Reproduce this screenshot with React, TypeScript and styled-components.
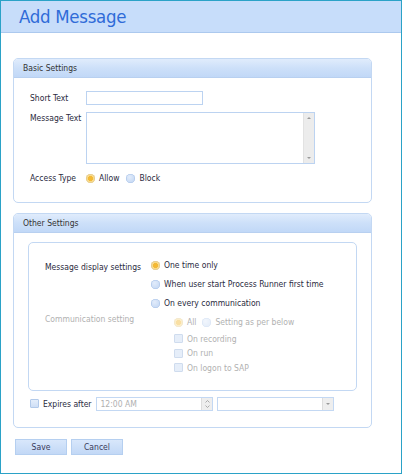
import React from "react";
import styled, { createGlobalStyle } from "styled-components";

const Global = createGlobalStyle`
  html, body { margin: 0; padding: 0; background: #fff; }
  * { box-sizing: border-box; }
  body { font-family: "DejaVu Sans Condensed", "DejaVu Sans", "Liberation Sans", sans-serif; }
`;

const Frame = styled.div`
  width: 402px;
  height: 474px;
  border: 1px solid #2ba2c7;
  background: #fff;
  display: flex;
  flex-direction: column;
`;

const Header = styled.div`
  height: 32px;
  background: #c7ddfa;
  border-bottom: 1px solid #acc9ee;
  display: flex;
  align-items: center;
  padding-left: 18px;
`;

const Title = styled.h1`
  margin: 0;
  font-family: "DejaVu Sans Condensed", "DejaVu Sans", sans-serif;
  font-weight: normal;
  font-size: 18.5px;
  color: #2f6bd8;
  letter-spacing: -0.3px;
`;

const Content = styled.div`
  padding: 25px 29px 0 12px;
  display: flex;
  flex-direction: column;
  gap: 10px;
`;

const Panel = styled.section`
  border: 1px solid #c3d8f3;
  border-radius: 5px;
  overflow: hidden;
`;

const PanelHead = styled.div`
  height: 19px;
  background: linear-gradient(#e0ecfc, #cde0f9 50%, #c1d8f7);
  border-bottom: 1px solid #b8d0f0;
  font-size: 8.5px;
  color: #333;
  display: flex;
  align-items: center;
  padding-left: 9px;
`;

const BasicBody = styled.div`
  padding: 13px 16px 17px;
  display: grid;
  grid-template-columns: 56px auto;
  row-gap: 7px;
  align-items: start;
`;

const Label = styled.span<{ $muted?: boolean; $top?: number }>`
  font-size: 8.5px;
  line-height: 14px;
  color: ${(p) => (p.$muted ? "#b1b1b1" : "#2a2a40")};
  margin-top: ${(p) => p.$top ?? 0}px;
`;

const TextInput = styled.div`
  width: 117px;
  height: 14px;
  border: 1px solid #bcd3f1;
  background: #fff;
`;

const TextArea = styled.div`
  width: 229px;
  height: 52px;
  border: 1px solid #bcd3f1;
  background: #fff;
  display: flex;
  justify-content: flex-end;
`;

const ScrollBar = styled.div`
  width: 11px;
  height: 100%;
  background: #ececec;
  border-left: 1px solid #e2e2e2;
  display: flex;
  flex-direction: column;
  justify-content: space-between;
  align-items: center;
  padding: 4px 0;
`;

const Arrow = styled.div<{ $down?: boolean }>`
  width: 0;
  height: 0;
  border-left: 2.5px solid transparent;
  border-right: 2.5px solid transparent;
  ${(p) =>
    p.$down
      ? "border-top: 2.5px solid #9a9a9a;"
      : "border-bottom: 2.5px solid #9a9a9a;"}
`;

const RadioGroup = styled.div<{ $gap?: number }>`
  display: flex;
  align-items: center;
  gap: ${(p) => p.$gap ?? 8}px;
  height: 14px;
`;

const Option = styled.label<{ $muted?: boolean }>`
  display: flex;
  align-items: center;
  gap: 4px;
  font-size: 8.5px;
  color: ${(p) => (p.$muted ? "#b1b1b1" : "#2a2a40")};
`;

const RadioDot = styled.span<{ $on?: boolean; $muted?: boolean }>`
  width: 9px;
  height: 9px;
  border-radius: 50%;
  flex: none;
  opacity: ${(p) => (p.$muted ? 0.45 : 1)};
  background: ${(p) =>
    p.$on
      ? "radial-gradient(circle, #f3b935 0 2.3px, #f8d98a 2.6px 3.6px, #e9d6a8 4px)"
      : "radial-gradient(circle at 40% 35%, #e2ecfb, #bcd2f1)"};
  box-shadow: inset 0 0 0 0.6px ${(p) => (p.$on ? "#e3c77f" : "#a9c3e8")};
`;

const Check = styled.span<{ $muted?: boolean }>`
  width: 9px;
  height: 9px;
  flex: none;
  border: 1px solid ${(p) => (p.$muted ? "#cfdcee" : "#b2caea")};
  background: ${(p) => (p.$muted ? "#e6eef9" : "linear-gradient(#e4eefb, #cfdff6)")};
  border-radius: 1px;
`;

const OtherBody = styled.div`
  padding: 9px 14px 16px;
  display: flex;
  flex-direction: column;
  gap: 6px;
`;

const Fieldset = styled.div`
  border: 1px solid #c3d8f3;
  border-radius: 5px;
  padding: 17px 16px 15px;
  display: grid;
  grid-template-columns: 106px auto;
  align-items: start;
`;

const OptionColumn = styled.div`
  display: flex;
  flex-direction: column;
  gap: 4px;
`;

const SubOptions = styled.div`
  display: flex;
  flex-direction: column;
  padding-left: 23px;
  gap: 0.5px;
`;

const SubCheck = styled(Option)`
  height: 14px;
`;

const ExpiresRow = styled.div`
  display: flex;
  align-items: center;
  height: 14px;
  padding-left: 2px;
`;

const ExpiresLabel = styled(Option)`
  margin-right: 5px;
  gap: 4px;
`;

const Field = styled.div<{ $w: number }>`
  width: ${(p) => p.$w}px;
  height: 14px;
  border: 1px solid #c3d8f3;
  background: #fff;
  display: flex;
  align-items: center;
  justify-content: space-between;
  font-size: 8.5px;
  color: #b0b0b0;
  padding-left: 3px;
  margin-right: 4px;
`;

const SideButton = styled.div`
  width: 11px;
  height: 12px;
  background: #eeeeee;
  border-left: 1px solid #dddddd;
  display: flex;
  flex-direction: column;
  align-items: center;
  justify-content: center;
  gap: 2px;
`;

const Chevron = styled.svg`
  display: block;
`;

const Buttons = styled.div`
  display: flex;
  gap: 4px;
  padding: 1px 0 0 2px;
`;

const Button = styled.button`
  width: 52px;
  height: 16px;
  padding: 0;
  border: 1px solid #b5cff0;
  background: linear-gradient(#d8e7fb, #c2d8f6);
  font-family: inherit;
  font-size: 8.5px;
  color: #3a3a5a;
`;

export default function App() {
  return (
    <>
      <Global />
      <Frame>
        <Header>
          <Title>Add Message</Title>
        </Header>
        <Content>
          <Panel>
            <PanelHead>Basic Settings</PanelHead>
            <BasicBody>
              <Label>Short Text</Label>
              <TextInput />
              <Label $top={-1}>Message Text</Label>
              <TextArea>
                <ScrollBar>
                  <Arrow />
                  <Arrow $down />
                </ScrollBar>
              </TextArea>
              <Label>Access Type</Label>
              <RadioGroup $gap={7}>
                <Option>
                  <RadioDot $on />
                  Allow
                </Option>
                <Option>
                  <RadioDot />
                  Block
                </Option>
              </RadioGroup>
            </BasicBody>
          </Panel>

          <Panel>
            <PanelHead>Other Settings</PanelHead>
            <OtherBody>
              <Fieldset>
                <Label>Message display settings</Label>
                <OptionColumn>
                  <Option>
                    <RadioDot $on />
                    One time only
                  </Option>
                  <Option style={{ marginTop: 5 }}>
                    <RadioDot />
                    When user start Process Runner first time
                  </Option>
                  <Option style={{ marginTop: 5 }}>
                    <RadioDot />
                    On every communication
                  </Option>
                </OptionColumn>
                <Label $muted $top={4}>
                  Communication setting
                </Label>
                <SubOptions>
                  <RadioGroup $gap={6} style={{ marginTop: 7 }}>
                    <Option $muted>
                      <RadioDot $on $muted />
                      All
                    </Option>
                    <Option $muted>
                      <RadioDot $muted />
                      Setting as per below
                    </Option>
                  </RadioGroup>
                  <SubCheck $muted style={{ marginTop: 2 }}>
                    <Check $muted />
                    On recording
                  </SubCheck>
                  <SubCheck $muted>
                    <Check $muted />
                    On run
                  </SubCheck>
                  <SubCheck $muted>
                    <Check $muted />
                    On logon to SAP
                  </SubCheck>
                </SubOptions>
              </Fieldset>
              <ExpiresRow>
                <ExpiresLabel>
                  <Check />
                  Expires after
                </ExpiresLabel>
                <Field $w={117}>
                  12:00 AM
                  <SideButton>
                    <Chevron width="5" height="3" viewBox="0 0 5 3">
                      <path d="M0.5 2.5 L2.5 0.5 L4.5 2.5" fill="none" stroke="#999" strokeWidth="0.8" />
                    </Chevron>
                    <Chevron width="5" height="3" viewBox="0 0 5 3">
                      <path d="M0.5 0.5 L2.5 2.5 L4.5 0.5" fill="none" stroke="#999" strokeWidth="0.8" />
                    </Chevron>
                  </SideButton>
                </Field>
                <Field $w={117}>
                  <span />
                  <SideButton>
                    <Arrow $down />
                  </SideButton>
                </Field>
              </ExpiresRow>
            </OtherBody>
          </Panel>

          <Buttons>
            <Button>Save</Button>
            <Button>Cancel</Button>
          </Buttons>
        </Content>
      </Frame>
    </>
  );
}
